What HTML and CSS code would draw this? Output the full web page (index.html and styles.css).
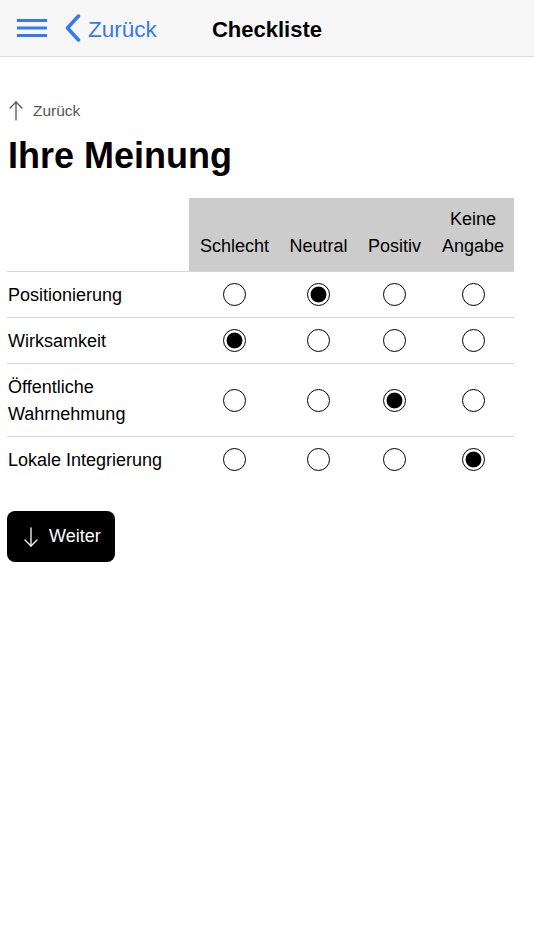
FILE: index.html
```html
<!DOCTYPE html>
<html lang="de">
<head>
  <meta charset="UTF-8">
  <meta name="viewport" content="width=device-width, initial-scale=1.0">
  <title>Checkliste</title>
  <link rel="stylesheet" href="styles.css">
</head>
<body>
  <div class="navbar">
    <div class="nav-left">
      <svg class="menu-icon" viewBox="0 0 30 20" fill="none" stroke="currentColor" stroke-width="3">
        <line x1="0" y1="1.5" x2="30" y2="1.5"></line>
        <line x1="0" y1="9" x2="30" y2="9"></line>
        <line x1="0" y1="16.5" x2="30" y2="16.5"></line>
      </svg>
      <a class="nav-back" href="#">
        <svg class="chevron" viewBox="0 0 16 28" fill="none" stroke="currentColor" stroke-width="3.5" stroke-linecap="round" stroke-linejoin="round">
          <polyline points="13.5 2 2.5 14 13.5 26"></polyline>
        </svg>
        Zurück
      </a>
    </div>
    <div class="nav-title">Checkliste</div>
    <div></div>
  </div>

  <div class="content">
    <a class="back-link" href="#">
      <svg class="back-arrow" viewBox="0 0 14 20" fill="none" stroke="currentColor" stroke-width="1.3" stroke-linecap="round" stroke-linejoin="round">
        <line x1="7" y1="1" x2="7" y2="19"></line>
        <polyline points="1 7 7 1 13 7"></polyline>
      </svg>
      Zurück
    </a>

    <h1>Ihre Meinung</h1>

    <table class="survey">
      <thead>
        <tr>
          <th class="blank"></th>
          <th class="col-1">Schlecht</th>
          <th class="col-2">Neutral</th>
          <th class="col-3">Positiv</th>
          <th class="col-4">Keine Angabe</th>
        </tr>
      </thead>
      <tbody>
        <tr>
          <td class="label">Positionierung</td>
          <td><input type="radio" name="q1"></td>
          <td><input type="radio" name="q1" checked></td>
          <td><input type="radio" name="q1"></td>
          <td><input type="radio" name="q1"></td>
        </tr>
        <tr>
          <td class="label">Wirksamkeit</td>
          <td><input type="radio" name="q2" checked></td>
          <td><input type="radio" name="q2"></td>
          <td><input type="radio" name="q2"></td>
          <td><input type="radio" name="q2"></td>
        </tr>
        <tr>
          <td class="label">Öffentliche Wahrnehmung</td>
          <td><input type="radio" name="q3"></td>
          <td><input type="radio" name="q3"></td>
          <td><input type="radio" name="q3" checked></td>
          <td><input type="radio" name="q3"></td>
        </tr>
        <tr>
          <td class="label">Lokale Integrierung</td>
          <td><input type="radio" name="q4"></td>
          <td><input type="radio" name="q4"></td>
          <td><input type="radio" name="q4"></td>
          <td><input type="radio" name="q4" checked></td>
        </tr>
      </tbody>
    </table>

    <button class="button-next">
      <svg class="next-arrow" viewBox="0 0 14 20" fill="none" stroke="currentColor" stroke-width="1.3" stroke-linecap="round" stroke-linejoin="round">
        <line x1="7" y1="1" x2="7" y2="19"></line>
        <polyline points="1 13 7 19 13 13"></polyline>
      </svg>
      Weiter
    </button>
  </div>
</body>
</html>
```

FILE: styles.css
```css
:root {
  --blue: #3478f6;
  --text: #000000;
  --text-light: #555555;
  --nav-bg: #f7f7f7;
  --nav-border: #dddddd;
  --head-bg: #cccccc;
  --row-border: #d6d6d6;
  --font-sans: 'Liberation Sans', Arial, Helvetica, sans-serif;
}

* {
  box-sizing: border-box;
}

body {
  margin: 0;
  background: #ffffff;
  color: var(--text);
  font-family: var(--font-sans);
  -webkit-font-smoothing: antialiased;
}

a {
  text-decoration: none;
}

/* Top bar */
.navbar {
  display: grid;
  grid-template-columns: 1fr auto 1fr;
  align-items: center;
  height: 57px;
  padding-top: 3px;
  background: var(--nav-bg);
  border-bottom: 1px solid var(--nav-border);
}

.nav-left {
  display: flex;
  align-items: center;
  padding-left: 17px;
}

.menu-icon {
  width: 30px;
  height: 20px;
  color: var(--blue);
  margin-top: -2px;
}

.nav-back {
  display: flex;
  align-items: center;
  margin-left: 18px;
  color: var(--blue);
  font-size: 22.5px;
}

.chevron {
  width: 16px;
  height: 28px;
  margin-right: 7px;
  margin-top: -3px;
}

.nav-title {
  font-size: 22px;
  font-weight: 700;
}

/* Page */
.content {
  padding: 0 20px 40px 7px;
}

.back-link {
  display: flex;
  align-items: center;
  margin-top: 42px;
  height: 24px;
  color: var(--text-light);
  font-size: 15.5px;
}

.back-arrow {
  width: 14px;
  height: 20px;
  margin-left: 2px;
  margin-right: 10px;
}

h1 {
  margin: 11px 0 0 1px;
  font-size: 36px;
  line-height: 44px;
  font-weight: 700;
}

/* Survey table */
.survey {
  width: 507px;
  margin-top: 20px;
  border-collapse: collapse;
  border-spacing: 0;
  font-size: 18px;
  line-height: 27px;
}

.survey th {
  padding: 8px 0 11px;
  font-weight: 400;
  text-align: center;
  vertical-align: bottom;
  background: var(--head-bg);
  border-bottom: 1px solid var(--row-border);
}

.survey th.blank {
  width: 182px;
  background: transparent;
}

.col-1 { width: 91px; }
.col-2 { width: 77px; }
.col-3 { width: 75px; }
.col-4 { width: 82px; }

.survey td {
  padding: 9.5px 0 8.5px;
  text-align: center;
  vertical-align: middle;
  border-bottom: 1px solid var(--row-border);
}

.survey tbody tr:last-child td {
  border-bottom: none;
}

.survey td.label {
  text-align: left;
  padding-left: 1px;
  padding-right: 8px;
}

.survey input[type="radio"] {
  -webkit-appearance: none;
  appearance: none;
  display: block;
  width: 23px;
  height: 23px;
  margin: -1px auto 0;
  border: 1.5px solid #000;
  border-radius: 50%;
  background: #fff;
}

.survey input[type="radio"]:checked {
  background: radial-gradient(circle, #000 0, #000 7.5px, #fff 8.3px);
}

/* Next button */
.button-next {
  display: flex;
  align-items: center;
  margin-top: 29px;
  height: 51px;
  width: 108px;
  padding: 0 0 0 17px;
  border: none;
  border-radius: 8px;
  background: #000;
  color: #fff;
  font-family: var(--font-sans);
  font-size: 18px;
  cursor: pointer;
}

.next-arrow {
  width: 14px;
  height: 20px;
  margin-right: 11px;
}
```
